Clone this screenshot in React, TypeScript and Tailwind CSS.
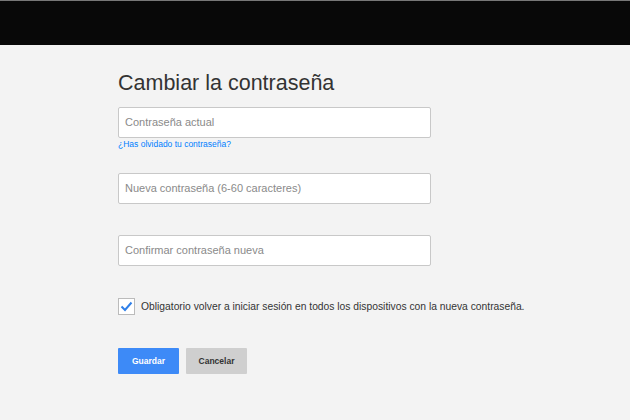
export default function App() {
  const f = { fontFamily: '"Liberation Sans", Arial, sans-serif' };
  return (
    <div style={f} className="w-[630px] h-[420px] bg-[#f3f3f3] overflow-hidden">
      <div className="h-[1px] bg-[#777]" />
      <div className="h-[44px] bg-[#080808]" />
      <div className="pl-[118px] pt-[25px]">
        <h1 className="text-[21.5px] leading-[26px] text-[#333] h-[26px]">Cambiar la contraseña</h1>
        <div className="mt-[11px] w-[313px] h-[31px] bg-white border border-[#c8c8c8] rounded-[2px] flex items-center px-[6px] text-[11px] text-[#8a8a8a]">Contraseña actual</div>
        <div className="mt-[1px] text-[8.5px] leading-[10px] text-[#0080ff]">¿Has olvidado tu contraseña?</div>
        <div className="mt-[24px] w-[313px] h-[31px] bg-white border border-[#c8c8c8] rounded-[2px] flex items-center px-[6px] text-[11px] text-[#8a8a8a]">Nueva contraseña (6-60 caracteres)</div>
        <div className="mt-[31px] w-[313px] h-[31px] bg-white border border-[#c8c8c8] rounded-[2px] flex items-center px-[6px] text-[11px] text-[#8a8a8a]">Confirmar contraseña nueva</div>
        <div className="mt-[32px] flex items-center gap-[6px]">
          <div className="w-[17px] h-[17px] bg-white border border-[#bbb] flex items-center justify-center">
            <svg width="13" height="13" viewBox="0 0 13 13"><path d="M1.5 6.5 L5 10 L11.5 2.5" fill="none" stroke="#2f7fe8" strokeWidth="2" /></svg>
          </div>
          <span className="text-[10.3px] text-[#333]">Obligatorio volver a iniciar sesión en todos los dispositivos con la nueva contraseña.</span>
        </div>
        <div className="mt-[33px] flex gap-[7px]">
          <div className="w-[61px] h-[26px] bg-[#3d8af7] rounded-[1px] flex items-center justify-center text-white text-[8.5px] font-bold">Guardar</div>
          <div className="w-[61px] h-[26px] bg-[#cfcfcf] rounded-[1px] flex items-center justify-center text-[#333] text-[8.5px] font-bold">Cancelar</div>
        </div>
      </div>
    </div>
  );
}
